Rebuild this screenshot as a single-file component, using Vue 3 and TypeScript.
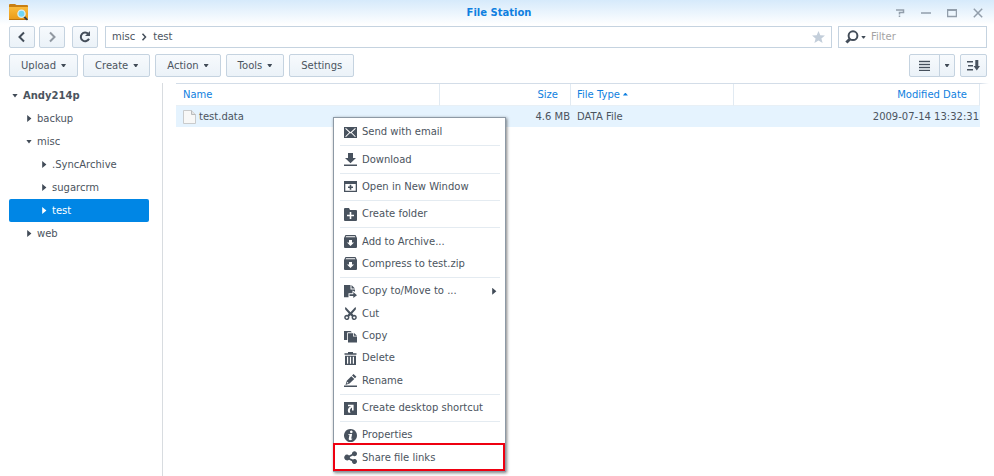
<script setup lang="ts">
import { ref } from 'vue'

interface TreeNode {
  name: string
  depth: number
  open?: boolean
}

interface MenuItem {
  label: string
  icon: string
  divider?: boolean
  submenu?: boolean
  marked?: boolean
}

const tree: TreeNode[] = [
  { name: 'Andy214p', depth: 0, open: true },
  { name: 'backup', depth: 1 },
  { name: 'misc', depth: 1, open: true },
  { name: '.SyncArchive', depth: 2 },
  { name: 'sugarcrm', depth: 2 },
  { name: 'test', depth: 2 },
  { name: 'web', depth: 1 },
]
const selected = ref('test')
const filter = ref('')

const actions = [
  { label: 'Upload', menu: true },
  { label: 'Create', menu: true },
  { label: 'Action', menu: true },
  { label: 'Tools', menu: true },
  { label: 'Settings', menu: false },
]

const files = [{ name: 'test.data', size: '4.6 MB', type: 'DATA File', modified: '2009-07-14 13:32:31' }]

const archive =
  'M1.5 0h10L13 3v9a1 1 0 0 1-1 1H1a1 1 0 0 1-1-1V3zM1.6 2.2h9.8l-.5-1H2.1zM5 5v2.500H3L6.500 11 10 7.500H8V5z'

const menu: MenuItem[] = [
  { label: 'Send with email', icon: 'M0 1h13v11H0zM1.200 2.700l4 3.700-4 4 .8.700 4-4 .5.400.5-.4 4 4 .8-.7-4-4 4-3.700-.7-.8-4.600 4.300L1.900 1.900z', divider: true },
  { label: 'Download', icon: 'M4 0h5v5h3L6.500 10.300 1 5h3zM0 11.500h13V13H0z', divider: true },
  { label: 'Open in New Window', icon: 'M0 1h13v11H0zM1.300 4v6.700h10.400V4zM5.700 4.800h1.600v1.700H9V8H7.300v1.700H5.700V8H4V6.500h1.700z', divider: true },
  { label: 'Create folder', icon: 'M0 1a1 1 0 0 1 1-1h4l1 2h6a1 1 0 0 1 1 1v9a1 1 0 0 1-1 1H1a1 1 0 0 1-1-1zM5.700 4v2.700H3v1.600h2.700V11h1.600V8.300H10V6.700H7.300V4z', divider: true },
  { label: 'Add to Archive...', icon: archive },
  { label: 'Compress to test.zip', icon: archive, divider: true },
  { label: 'Copy to/Move to ...', icon: 'M0 0h6.500v4.500H11v2.300L8.500 5.500v2.700H4.500v4H0zM7.500 0 11 3.500H7.500zM5.500 9.200H9.300V7l3.700 3.200L9.300 13v-2H5.500z', submenu: true },
  { label: 'Cut', icon: 'M1.600 0 6.500 5.200 11.400 0c.9 1.200.6 2.300-.3 3.300L8.200 6.600l1.300 1.300a2.600 2.600 0 1 1-1.700 1.500L6.500 8.200 5.200 9.400a2.600 2.600 0 1 1-1.700-1.500L4.800 6.600 1.900 3.300C1 2.300.7 1.200 1.600 0zM2.800 9.400a1 1 0 1 0 .01 0zM10.200 9.400a1 1 0 1 0 .01 0z' },
  { label: 'Copy', icon: 'M0 1h6.500L8 2.300H4A.8.8 0 0 0 3.200 3v7H0zM4 3.200h5v3.300h4v6H4zM9.800 2.700 13 5.700H9.800z' },
  { label: 'Delete', icon: 'M4 0h5v1.300h3.500v1.500H.5V1.300H4zM1 3.700h11V13H1zM3 4.700v7h1.200v-7zM5.900 4.700v7h1.200v-7zM8.800 4.700v7H10v-7z' },
  { label: 'Rename', icon: 'M8 1.500 9.500 0l2.900 2.700L11 4.200zM7.300 2.200l3 2.800-4.800 4.600L1.500 11l1.300-4.300zM3.300 7.800l-.5 1.700 1.700-.5zM0 11.500h13V13H0z', divider: true },
  { label: 'Create desktop shortcut', icon: 'M0 0h13v13H0zM4 2.700v1.500h3.200C4.300 5.300 3 8 4.600 10.700H6.500C5.200 8.500 6 6.700 8 5.600V8.500h1.600V2.700z', divider: true },
  { label: 'Properties', icon: 'M6.500 0a6.500 6.500 0 1 1-.01 0zM7.300 1.600a1.300 1.300 0 1 0 .01 0zM4.300 4.900v.9h1.200L4.700 10c0 1.500 2 1.500 3.500.2v-.8l-1 .3.900-4.800z' },
  { label: 'Share file links', icon: 'M3 3.600a2.900 2.900 0 0 1 2 .8L8 3a2.500 2.500 0 1 1 .9 1.600L5.900 6v1.200l3 1.400a2.500 2.500 0 1 1-.9 1.600L5 8.700A2.900 2.900 0 1 1 3 3.600z', marked: true },
]
</script>

<template>
  <main class="window">
    <header class="titlebar">
      <svg class="logo" width="20" height="17" viewBox="0 0 20 17" aria-hidden="true">
        <defs>
          <linearGradient id="folder" x1="0" y1="0" x2="0" y2="1">
            <stop offset="0" stop-color="#fbbb3a" />
            <stop offset="1" stop-color="#e99a18" />
          </linearGradient>
        </defs>
        <path d="M0 2.500V1Q0 0 1 0h5l1.500 1H18q1 0 1 1v2H0z" fill="#c87f13" />
        <path d="M0 3h19v12q0 1-1 1H1q-1 0-1-1z" fill="url(#folder)" />
        <path d="M0 15.500h19" stroke="#bd7511" />
        <path d="m15.300 13 2.500 2.400" stroke="#36424e" stroke-width="1.800" stroke-linecap="round" />
        <circle cx="12.500" cy="9.700" r="3.600" fill="#6ed6f6" stroke="#d9eef5" stroke-width="1.300" />
      </svg>
      <h1>File Station</h1>
      <div class="controls">
        <button type="button" aria-label="Help"><svg width="10" height="10" viewBox="0 0 10 10"><path d="M1 2h7.500v2.500H4.500v2M4.500 7.500V9" /></svg></button>
        <button type="button" aria-label="Minimize"><svg width="10" height="10" viewBox="0 0 10 10"><path d="M0 5h10" /></svg></button>
        <button type="button" aria-label="Maximize"><svg width="10" height="10" viewBox="0 0 10 10"><path d="M.5 2v6.500h9V2" /><path d="M0 2h10" stroke-width="2" /></svg></button>
        <button type="button" aria-label="Close"><svg width="10" height="10" viewBox="0 0 10 10"><path d="m.8.8 8.400 8.400M9.200.8.8 9.200" /></svg></button>
      </div>
    </header>

    <nav class="row location">
      <button class="btn square" type="button" aria-label="Back"><svg width="10" height="12" viewBox="0 0 10 12"><path d="M7 1.500 2.500 6 7 10.500" class="stroke bold" /></svg></button>
      <button class="btn square faded" type="button" aria-label="Forward"><svg width="10" height="12" viewBox="0 0 10 12"><path d="M3 1.500 7.500 6 3 10.500" class="stroke bold" /></svg></button>
      <button class="btn square refresh" type="button" aria-label="Refresh"><svg width="12" height="12" viewBox="0 0 12 12"><path d="M9.300 3A4.300 4.300 0 1 0 10 7.800" class="stroke thick" /><path d="M11 0v5H6z" /></svg></button>
      <div class="path">
        <a href="#misc">misc</a>
        <svg width="6" height="8" viewBox="0 0 6 8"><path d="M1.500.8 4.500 4l-3 3.200" class="stroke" /></svg>
        <a href="#test">test</a>
        <button class="star" type="button" aria-label="Add to favorites"><svg width="13" height="12" viewBox="0 0 13 12"><path d="m6.500 0 1.800 4.200 4.700.3-3.600 3 1.200 4.500-4.100-2.500L2.400 12l1.200-4.500L0 4.500l4.700-.3z" /></svg></button>
      </div>
      <label class="search">
        <svg width="14" height="14" viewBox="0 0 14 14"><circle cx="8" cy="5.700" r="4.400" class="stroke thick" /><path d="M4.700 9.200 1.400 12.500" class="stroke handle" /></svg>
        <i class="caret"></i>
        <input v-model="filter" type="text" placeholder="Filter" aria-label="Filter" />
      </label>
    </nav>

    <div class="row toolbar">
      <button v-for="a in actions" :key="a.label" class="btn" type="button">{{ a.label }}<i v-if="a.menu" class="caret"></i></button>
      <div class="split">
        <button class="btn" type="button" aria-label="List view"><svg width="11" height="11" viewBox="0 0 11 11"><path d="M0 1h11v1H0zM0 4h11v1H0zM0 7h11v1H0zM0 10h11v1H0z" stroke="#414b57" stroke-width=".4" /></svg></button>
        <button class="btn" type="button" aria-label="View options"><i class="caret"></i></button>
      </div>
      <button class="btn sort" type="button" aria-label="Sort"><svg width="13" height="11" viewBox="0 0 13 11"><path d="M0 1h6v1.500H0zM1 5h5v1.500H1zM0 9h6v1.500H0zM8.300 0h3v6H13l-3.200 4.500L6.600 6h1.700z" /></svg></button>
    </div>

    <div class="body">
      <aside class="tree">
        <button
          v-for="n in tree"
          :key="n.name"
          type="button"
          :class="['node', 'depth' + n.depth, { open: n.open, selected: n.name === selected }]"
          @click="selected = n.name"
        ><i class="twist"></i>{{ n.name }}</button>
      </aside>

      <section class="list">
        <table>
          <colgroup><col class="c-name" /><col class="c-size" /><col class="c-type" /><col /></colgroup>
          <thead>
            <tr><th>Name</th><th class="num">Size</th><th>File Type<i class="asc"></i></th><th class="num">Modified Date</th></tr>
          </thead>
          <tbody>
            <tr v-for="f in files" :key="f.name">
              <td>
                <div class="file">
                  <svg width="13" height="14" viewBox="0 0 13 14"><path d="M.5.5h8l4 4v9H.5z" fill="#f8f8f7" stroke="#c9cbcc" /><path d="M8.500.5v4h4" fill="#e4e4e4" stroke="#b9bbbc" /></svg>
                  {{ f.name }}
                </div>
              </td>
              <td class="num">{{ f.size }}</td>
              <td>{{ f.type }}</td>
              <td class="num">{{ f.modified }}</td>
            </tr>
          </tbody>
        </table>
      </section>
    </div>

    <div class="menu" role="menu">
      <template v-for="m in menu" :key="m.label">
        <button type="button" role="menuitem" :class="['item', { marked: m.marked }]">
          <svg width="13" height="13" viewBox="0 0 13 13" aria-hidden="true"><path :d="m.icon" fill-rule="evenodd" /></svg>
          {{ m.label }}
          <i v-if="m.submenu" class="twist sub"></i>
        </button>
        <hr v-if="m.divider" />
      </template>
    </div>
  </main>
</template>

<style>
body {
  background: #fff;
}
</style>

<style scoped>
.window {
  position: relative;
  display: flex;
  flex-direction: column;
  min-height: 100vh;
  box-sizing: border-box;
  overflow: hidden;
  color: #4b545e;
  font: 10px/16px "DejaVu Sans", Verdana, sans-serif;
}
.window * {
  box-sizing: border-box;
}
button {
  font: inherit;
  color: inherit;
  padding: 0;
  border: 0;
  background: none;
  white-space: nowrap;
}
svg {
  flex: none;
  display: block;
  fill: #48525e;
}
.stroke {
  fill: none;
  stroke: #434d59;
  stroke-width: 1.500;
}
.thick,
.bold {
  stroke-width: 2;
}
.handle {
  stroke-width: 3;
}
.titlebar {
  display: grid;
  grid-template-columns: 1fr auto 1fr;
  align-items: center;
  height: 25px;
  padding: 0 5px 0 9px;
  background: linear-gradient(#d6eafb, #fff);
}
h1 {
  margin: 0;
  font-size: 10px;
  line-height: 16px;
  color: #0f7fe0;
}
.controls {
  display: flex;
  justify-content: flex-end;
  gap: 16px;
  padding-right: 6px;
}
.controls svg {
  fill: none;
  stroke: #929eab;
  stroke-width: 1.500;
}
.row {
  display: flex;
  padding: 0 7px 0 9px;
}
.location {
  gap: 4px;
  margin-top: 1px;
  height: 22px;
}
.btn {
  display: flex;
  align-items: center;
  justify-content: center;
  border: 1px solid #c5d3e0;
  border-radius: 2px;
  background: linear-gradient(#f7fafd, #ebf2f8);
  padding: 0 11px;
}
.square {
  width: 26px;
  padding: 0;
}
.faded svg {
  opacity: 0.55;
}
.refresh {
  margin-left: 3px;
}
.path {
  display: flex;
  align-items: center;
  flex: 1;
  gap: 6px;
  margin-left: 3px;
  padding: 0 6px;
  border: 1px solid #c5d3e0;
}
.path a {
  color: inherit;
  text-decoration: none;
}
.star {
  margin-left: auto;
}
.star svg {
  fill: #c3ceda;
}
.search {
  display: flex;
  align-items: center;
  width: 149px;
  margin-left: 2px;
  padding-left: 6px;
  border: 1px solid #c5d3e0;
}
.search .caret {
  margin: 0 5px 0 2px;
}
.search input {
  flex: 1;
  min-width: 0;
  padding: 0;
  border: 0;
  outline: 0;
  background: none;
  font: inherit;
  color: inherit;
}
.search input::placeholder {
  color: #a3a3a3;
}
.caret {
  flex: none;
  width: 5px;
  height: 3px;
  background: #414b57;
  clip-path: polygon(0 0, 100% 0, 60% 100%, 40% 100%);
}
.toolbar {
  gap: 5px;
  height: 23px;
  margin-top: 6px;
}
.toolbar .caret {
  margin-left: 5px;
}
.split {
  display: flex;
  margin-left: auto;
}
.split .btn {
  width: 31px;
  padding: 0;
  border-radius: 2px 0 0 2px;
}
.split .btn + .btn {
  width: 16px;
  margin-left: -1px;
  border-radius: 0 2px 2px 0;
}
.split .caret {
  margin: 0;
}
.sort {
  width: 27px;
  padding: 0;
}
.body {
  display: flex;
  flex: 1;
  padding-top: 6px;
}
.tree {
  display: flex;
  flex-direction: column;
  align-items: stretch;
  width: 163px;
  padding: 1px 13px 0 9px;
  border-right: 1px solid #d8dce0;
}
.node {
  display: flex;
  align-items: center;
  gap: 5px;
  height: 23px;
  padding-left: 3px;
  border-radius: 2px;
  text-align: left;
}
.depth0 {
  font-weight: bold;
}
.depth1 {
  padding-left: 17px;
}
.depth2 {
  padding-left: 32px;
}
.twist {
  width: 6px;
  height: 7px;
  background: #414b57;
  clip-path: polygon(20% 0, 90% 50%, 20% 100%);
}
.open .twist {
  height: 4px;
  clip-path: polygon(0 0, 100% 0, 50% 100%);
}
.selected {
  color: #fff;
  background: #0086e5;
}
.selected .twist {
  background: #fff;
}
.list {
  flex: 1;
  margin: 0 5px 0 13px;
}
table {
  width: 100%;
  table-layout: fixed;
  border-spacing: 0;
  border-top: 1px solid #d3dde8;
  border-right: 9px solid #fff;
}
.c-name {
  width: 264px;
}
.c-size {
  width: 131px;
}
.c-type {
  width: 163px;
}
th {
  height: 22px;
  padding: 0 12px 0 6px;
  border-right: 1px solid #e1eaf2;
  border-bottom: 1px solid #e8f0f6;
  font-weight: normal;
  text-align: left;
  color: #0f7fe0;
}
td {
  height: 21px;
  padding: 0 1px 0 6px;
  background: #e5f3fe;
}
th:first-child,
td:first-child {
  padding-left: 7px;
}
.num {
  text-align: right;
}
.asc {
  display: inline-block;
  width: 5px;
  height: 3px;
  margin: 0 0 2px 3px;
  background: #0f7fe0;
  clip-path: polygon(50% 0, 100% 100%, 0 100%);
}
.file {
  display: flex;
  align-items: center;
  gap: 3px;
}
.menu {
  position: absolute;
  left: 333px;
  top: 117px;
  display: flex;
  flex-direction: column;
  width: 173px;
  height: 355px;
  padding: 3px 0 2px;
  border: 1px solid #8d99a5;
  background: #fff;
  box-shadow: 1px 1px 3px rgba(0, 0, 0, 0.5);
}
.item {
  position: relative;
  display: flex;
  align-items: center;
  flex: 1;
  gap: 5px;
  padding: 0 8px 0 10px;
  text-align: left;
}
.menu hr {
  flex: none;
  width: 160px;
  height: 1px;
  margin: 2px auto;
  border: 0;
  background: #e4ebf1;
}
.sub {
  margin-left: auto;
}
.marked::after {
  content: "";
  position: absolute;
  inset: -4px 0 -2px -1px;
  border: 2px solid #ee0010;
}
</style>
